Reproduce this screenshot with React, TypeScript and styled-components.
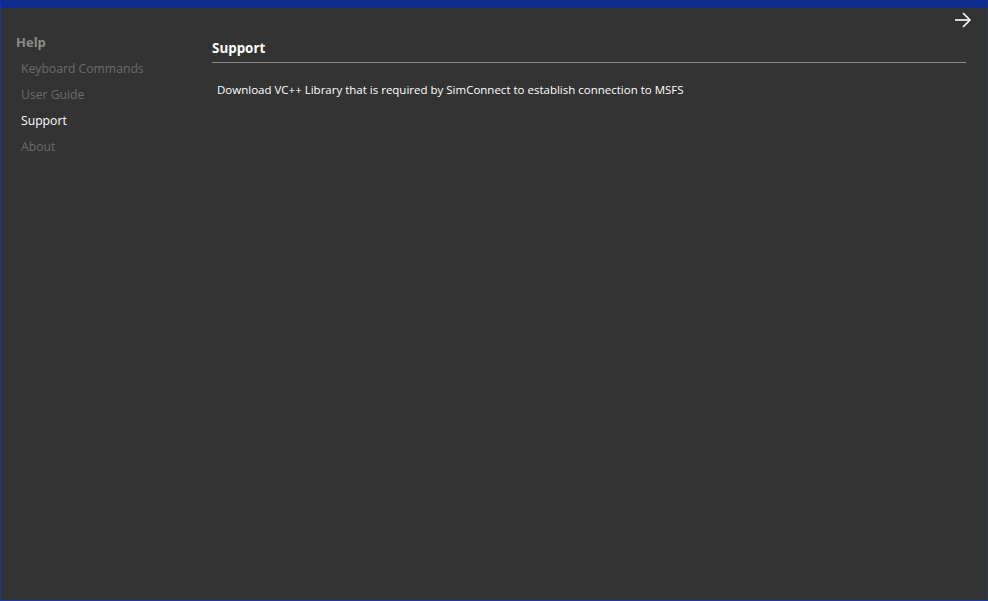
import React from "react";
import styled, { createGlobalStyle } from "styled-components";

const Global = createGlobalStyle`
  html, body { margin: 0; padding: 0; background: #333333; }
  body { font-family: "Open Sans", "Noto Sans", sans-serif; }
  * { box-sizing: border-box; }
`;

const Frame = styled.div`
  width: 988px;
  height: 601px;
  background: #333333;
  border-top: 8px solid #0f2c8c;
  border-left: 1px solid #1d3a9a;
  border-bottom: 1px solid #1d3a9a;
  border-right: 1px solid #2a3560;
  display: flex;
  flex-direction: column;
`;

const TopBar = styled.div`
  height: 26px;
  display: flex;
  justify-content: flex-end;
  align-items: flex-start;
  padding-right: 15px;
  padding-top: 4px;
`;

const Body = styled.div`
  display: flex;
  flex: 1;
`;

const Sidebar = styled.nav`
  width: 211px;
  padding-left: 15px;
  display: flex;
  flex-direction: column;
`;

const SideTitle = styled.div`
  font-size: 13px;
  font-weight: 700;
  color: #8c8c8c;
  margin-top: -2px;
  height: 24px;
  line-height: 20px;
`;

const SideItem = styled.div<{ $active?: boolean }>`
  font-size: 12.2px;
  color: ${(p) => (p.$active ? "#ffffff" : "#6b6b6b")};
  padding-left: 5px;
  height: 26px;
  line-height: 26px;
`;

const Content = styled.main`
  flex: 1;
  padding-right: 21px;
  display: flex;
  flex-direction: column;
`;

const HeadWrap = styled.div`
  border-bottom: 1px solid #8a8a8a;
  height: 29px;
  display: flex;
  align-items: center;
`;

const HeadText = styled.h2`
  margin: 0;
  font-size: 13.4px;
  font-weight: 700;
  color: #ffffff;
  line-height: 20px;
`;

const Text = styled.p`
  margin: 18px 0 0 5px;
  font-size: 11.5px;
  color: #ffffff;
  line-height: 18px;
`;

export default function App() {
  return (
    <>
      <Global />
      <Frame>
        <TopBar>
          <svg width="18" height="16" viewBox="0 0 18 16" fill="none" stroke="#ffffff" strokeWidth="1.6">
            <path d="M1 8 H16" />
            <path d="M9 1 L16 8 L9 15" />
          </svg>
        </TopBar>
        <Body>
          <Sidebar>
            <SideTitle>Help</SideTitle>
            <SideItem>Keyboard Commands</SideItem>
            <SideItem>User Guide</SideItem>
            <SideItem $active>Support</SideItem>
            <SideItem>About</SideItem>
          </Sidebar>
          <Content>
            <HeadWrap>
              <HeadText>Support</HeadText>
            </HeadWrap>
            <Text>Download VC++ Library that is required by SimConnect to establish connection to MSFS</Text>
          </Content>
        </Body>
      </Frame>
    </>
  );
}
